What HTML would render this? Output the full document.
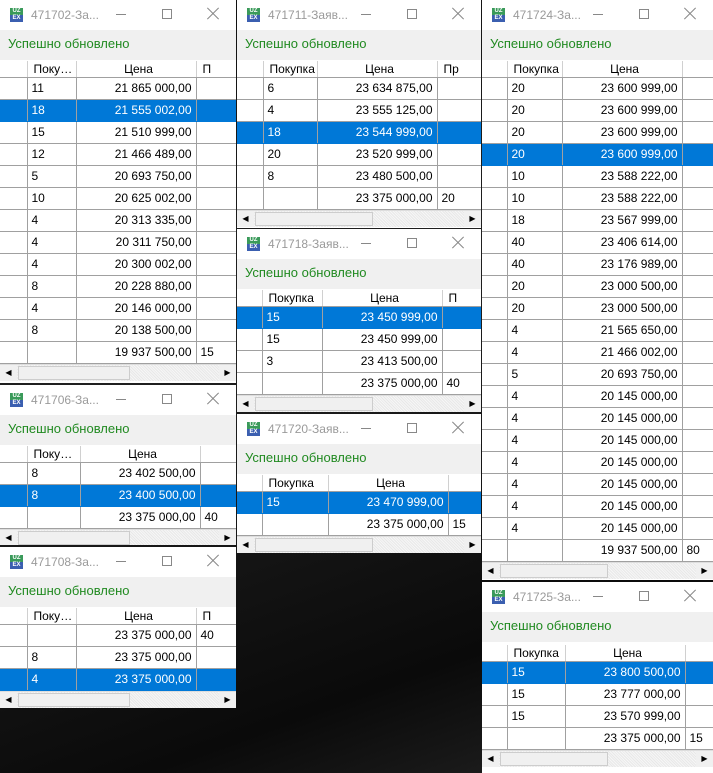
<!DOCTYPE html>
<html><head><meta charset="utf-8">
<style>
*{box-sizing:border-box;margin:0;padding:0}
body{width:713px;height:773px;position:relative;overflow:hidden;background:#111;font-family:"Liberation Sans",sans-serif;font-size:12px;color:#000}
.bg{position:absolute;left:0;top:0;width:713px;height:773px;background:linear-gradient(160deg,#0c0c0c 0%,#202020 40%,#161616 60%,#0a0a0a 80%,#262626 100%)}
.w{position:absolute;background:#fff;overflow:hidden}
.t{position:relative;height:30px;background:#fff}
.ic{position:absolute;left:10px;top:8px;width:13px;height:14px;font-size:6px;line-height:7px;font-weight:bold;color:#fff;text-align:center}
.ic b{display:block;background:#3a9a5a;height:7px}
.ic i{display:block;background:#3b5fb0;height:7px;font-style:normal}
.tt{position:absolute;left:31px;top:8px;color:#9a9a9a;font-size:12px}
.mn{position:absolute;top:14px;width:10px;height:1px;background:#888}
.mx{position:absolute;top:9px;width:10px;height:10px;border:1px solid #888}
.cl{position:absolute;top:8px;width:12px;height:12px}
.cl:before,.cl:after{content:"";position:absolute;left:-2px;top:5px;width:16px;height:1px;background:#888;transform:rotate(45deg)}
.cl:after{transform:rotate(-45deg)}
.s{height:31px;background:#f0f0f0;color:#218a21;font-size:13px;line-height:28px;padding-left:8px;border-bottom:1px solid #fff}
table{border-collapse:collapse;table-layout:fixed}
th{height:16px;font-weight:normal;text-align:left;padding:0 1px 0 6px;border-right:1px solid #d0d0d0;border-bottom:1px solid #a0a0a0;white-space:nowrap;overflow:hidden;text-overflow:ellipsis;background:#fff}
th.p{text-align:center}
td{height:22px;border:1px solid #a0a0a0;padding:0 4px;white-space:nowrap;overflow:hidden}
td.r{text-align:right}
td:first-child,th:first-child{border-left:none}
tr.sel td{background:#0078d7;color:#fff;border-color:#0078d7 #a0a0a0}
.sb{position:relative;height:17px;background:repeating-linear-gradient(45deg,#e8e8e8 0 1px,#f6f6f6 1px 2px);border-top:1px solid #ddd}
.sb .a{position:absolute;top:0;width:17px;height:16px;background:#f0f0f0;font-size:8px;line-height:16px;text-align:center;color:#000}
.sb .th{position:absolute;left:18px;top:1px;height:14px;background:#f0f0f0;border:1px solid #cdcdcd}
</style></head><body>
<div class="bg"></div>

<!-- 471702 -->
<div class="w" style="left:0;top:0;width:236px;height:383px">
<div class="t"><div class="ic"><b>UZ</b><i>EX</i></div><div class="tt">471702-За...</div><div class="mn" style="left:116px"></div><div class="mx" style="left:162px"></div><div class="cl" style="left:207px"></div></div>
<div class="s">Успешно обновлено</div>
<table style="width:256px"><colgroup><col style="width:27px"><col style="width:49px"><col style="width:120px"><col style="width:60px"></colgroup>
<tr><th></th><th>Покупка</th><th class="p">Цена</th><th>П</th></tr>
<tr><td></td><td>11</td><td class="r">21 865 000,00</td><td></td></tr>
<tr class="sel"><td></td><td>18</td><td class="r">21 555 002,00</td><td></td></tr>
<tr><td></td><td>15</td><td class="r">21 510 999,00</td><td></td></tr>
<tr><td></td><td>12</td><td class="r">21 466 489,00</td><td></td></tr>
<tr><td></td><td>5</td><td class="r">20 693 750,00</td><td></td></tr>
<tr><td></td><td>10</td><td class="r">20 625 002,00</td><td></td></tr>
<tr><td></td><td>4</td><td class="r">20 313 335,00</td><td></td></tr>
<tr><td></td><td>4</td><td class="r">20 311 750,00</td><td></td></tr>
<tr><td></td><td>4</td><td class="r">20 300 002,00</td><td></td></tr>
<tr><td></td><td>8</td><td class="r">20 228 880,00</td><td></td></tr>
<tr><td></td><td>4</td><td class="r">20 146 000,00</td><td></td></tr>
<tr><td></td><td>8</td><td class="r">20 138 500,00</td><td></td></tr>
<tr><td></td><td></td><td class="r">19 937 500,00</td><td>15</td></tr>
</table>
<div class="sb"><div class="a" style="left:0">◀</div><div class="th" style="width:112px"></div><div class="a" style="left:219px">▶</div></div>
</div>

<!-- 471706 -->
<div class="w" style="left:0;top:385px;width:236px;height:160px">
<div class="t"><div class="ic"><b>UZ</b><i>EX</i></div><div class="tt">471706-За...</div><div class="mn" style="left:116px"></div><div class="mx" style="left:162px"></div><div class="cl" style="left:207px"></div></div>
<div class="s">Успешно обновлено</div>
<table style="width:260px"><colgroup><col style="width:27px"><col style="width:53px"><col style="width:120px"><col style="width:60px"></colgroup>
<tr><th></th><th>Покупка</th><th class="p">Цена</th><th></th></tr>
<tr><td></td><td>8</td><td class="r">23 402 500,00</td><td></td></tr>
<tr class="sel"><td></td><td>8</td><td class="r">23 400 500,00</td><td></td></tr>
<tr><td></td><td></td><td class="r">23 375 000,00</td><td>40</td></tr>
</table>
<div class="sb"><div class="a" style="left:0">◀</div><div class="th" style="width:112px"></div><div class="a" style="left:219px">▶</div></div>
</div>

<!-- 471708 -->
<div class="w" style="left:0;top:547px;width:236px;height:161px">
<div class="t"><div class="ic"><b>UZ</b><i>EX</i></div><div class="tt">471708-За...</div><div class="mn" style="left:116px"></div><div class="mx" style="left:162px"></div><div class="cl" style="left:207px"></div></div>
<div class="s">Успешно обновлено</div>
<table style="width:256px"><colgroup><col style="width:27px"><col style="width:49px"><col style="width:120px"><col style="width:60px"></colgroup>
<tr><th></th><th>Покупка</th><th class="p">Цена</th><th>П</th></tr>
<tr><td></td><td></td><td class="r">23 375 000,00</td><td>40</td></tr>
<tr><td></td><td>8</td><td class="r">23 375 000,00</td><td></td></tr>
<tr class="sel"><td></td><td>4</td><td class="r">23 375 000,00</td><td></td></tr>
</table>
<div class="sb"><div class="a" style="left:0">◀</div><div class="th" style="width:112px"></div><div class="a" style="left:219px">▶</div></div>
</div>

<!-- 471711 -->
<div class="w" style="left:237px;top:0;width:244px;height:228px">
<div class="t"><div class="ic"><b>UZ</b><i>EX</i></div><div class="tt">471711-Заяв...</div><div class="mn" style="left:124px"></div><div class="mx" style="left:170px"></div><div class="cl" style="left:215px"></div></div>
<div class="s">Успешно обновлено</div>
<table style="width:260px"><colgroup><col style="width:26px"><col style="width:54px"><col style="width:120px"><col style="width:60px"></colgroup>
<tr><th></th><th>Покупка</th><th class="p">Цена</th><th>Пр</th></tr>
<tr><td></td><td>6</td><td class="r">23 634 875,00</td><td></td></tr>
<tr><td></td><td>4</td><td class="r">23 555 125,00</td><td></td></tr>
<tr class="sel"><td></td><td>18</td><td class="r">23 544 999,00</td><td></td></tr>
<tr><td></td><td>20</td><td class="r">23 520 999,00</td><td></td></tr>
<tr><td></td><td>8</td><td class="r">23 480 500,00</td><td></td></tr>
<tr><td></td><td></td><td class="r">23 375 000,00</td><td>20</td></tr>
</table>
<div class="sb"><div class="a" style="left:0">◀</div><div class="th" style="width:118px"></div><div class="a" style="left:227px">▶</div></div>
</div>

<!-- 471718 -->
<div class="w" style="left:237px;top:229px;width:244px;height:183px">
<div class="t"><div class="ic"><b>UZ</b><i>EX</i></div><div class="tt">471718-Заяв...</div><div class="mn" style="left:124px"></div><div class="mx" style="left:170px"></div><div class="cl" style="left:215px"></div></div>
<div class="s">Успешно обновлено</div>
<table style="width:265px"><colgroup><col style="width:25px"><col style="width:60px"><col style="width:120px"><col style="width:60px"></colgroup>
<tr><th></th><th>Покупка</th><th class="p">Цена</th><th>П</th></tr>
<tr class="sel"><td></td><td>15</td><td class="r">23 450 999,00</td><td></td></tr>
<tr><td></td><td>15</td><td class="r">23 450 999,00</td><td></td></tr>
<tr><td></td><td>3</td><td class="r">23 413 500,00</td><td></td></tr>
<tr><td></td><td></td><td class="r">23 375 000,00</td><td>40</td></tr>
</table>
<div class="sb"><div class="a" style="left:0">◀</div><div class="th" style="width:118px"></div><div class="a" style="left:227px">▶</div></div>
</div>

<!-- 471720 -->
<div class="w" style="left:237px;top:414px;width:244px;height:139px">
<div class="t"><div class="ic"><b>UZ</b><i>EX</i></div><div class="tt">471720-Заяв...</div><div class="mn" style="left:124px"></div><div class="mx" style="left:170px"></div><div class="cl" style="left:215px"></div></div>
<div class="s">Успешно обновлено</div>
<table style="width:271px"><colgroup><col style="width:25px"><col style="width:66px"><col style="width:120px"><col style="width:60px"></colgroup>
<tr><th></th><th>Покупка</th><th class="p">Цена</th><th></th></tr>
<tr class="sel"><td></td><td>15</td><td class="r">23 470 999,00</td><td></td></tr>
<tr><td></td><td></td><td class="r">23 375 000,00</td><td>15</td></tr>
</table>
<div class="sb"><div class="a" style="left:0">◀</div><div class="th" style="width:118px"></div><div class="a" style="left:227px">▶</div></div>
</div>

<!-- 471724 -->
<div class="w" style="left:482px;top:0;width:231px;height:580px">
<div class="t"><div class="ic"><b>UZ</b><i>EX</i></div><div class="tt">471724-За...</div><div class="mn" style="left:111px"></div><div class="mx" style="left:157px"></div><div class="cl" style="left:202px"></div></div>
<div class="s">Успешно обновлено</div>
<table style="width:260px"><colgroup><col style="width:25px"><col style="width:55px"><col style="width:120px"><col style="width:60px"></colgroup>
<tr><th></th><th>Покупка</th><th class="p">Цена</th><th></th></tr>
<tr><td></td><td>20</td><td class="r">23 600 999,00</td><td></td></tr>
<tr><td></td><td>20</td><td class="r">23 600 999,00</td><td></td></tr>
<tr><td></td><td>20</td><td class="r">23 600 999,00</td><td></td></tr>
<tr class="sel"><td></td><td>20</td><td class="r">23 600 999,00</td><td></td></tr>
<tr><td></td><td>10</td><td class="r">23 588 222,00</td><td></td></tr>
<tr><td></td><td>10</td><td class="r">23 588 222,00</td><td></td></tr>
<tr><td></td><td>18</td><td class="r">23 567 999,00</td><td></td></tr>
<tr><td></td><td>40</td><td class="r">23 406 614,00</td><td></td></tr>
<tr><td></td><td>40</td><td class="r">23 176 989,00</td><td></td></tr>
<tr><td></td><td>20</td><td class="r">23 000 500,00</td><td></td></tr>
<tr><td></td><td>20</td><td class="r">23 000 500,00</td><td></td></tr>
<tr><td></td><td>4</td><td class="r">21 565 650,00</td><td></td></tr>
<tr><td></td><td>4</td><td class="r">21 466 002,00</td><td></td></tr>
<tr><td></td><td>5</td><td class="r">20 693 750,00</td><td></td></tr>
<tr><td></td><td>4</td><td class="r">20 145 000,00</td><td></td></tr>
<tr><td></td><td>4</td><td class="r">20 145 000,00</td><td></td></tr>
<tr><td></td><td>4</td><td class="r">20 145 000,00</td><td></td></tr>
<tr><td></td><td>4</td><td class="r">20 145 000,00</td><td></td></tr>
<tr><td></td><td>4</td><td class="r">20 145 000,00</td><td></td></tr>
<tr><td></td><td>4</td><td class="r">20 145 000,00</td><td></td></tr>
<tr><td></td><td>4</td><td class="r">20 145 000,00</td><td></td></tr>
<tr><td></td><td></td><td class="r">19 937 500,00</td><td>80</td></tr>
</table>
<div class="sb"><div class="a" style="left:0">◀</div><div class="th" style="width:108px"></div><div class="a" style="left:214px">▶</div></div>
</div>

<!-- 471725 -->
<div class="w" style="left:482px;top:582px;width:231px;height:191px">
<div class="t"><div class="ic"><b>UZ</b><i>EX</i></div><div class="tt">471725-За...</div><div class="mn" style="left:111px"></div><div class="mx" style="left:157px"></div><div class="cl" style="left:202px"></div></div>
<div class="s">Успешно обновлено</div>
<table style="width:263px;margin-top:2px"><colgroup><col style="width:25px"><col style="width:58px"><col style="width:120px"><col style="width:60px"></colgroup>
<tr><th></th><th>Покупка</th><th class="p">Цена</th><th></th></tr>
<tr class="sel"><td></td><td>15</td><td class="r">23 800 500,00</td><td></td></tr>
<tr><td></td><td>15</td><td class="r">23 777 000,00</td><td></td></tr>
<tr><td></td><td>15</td><td class="r">23 570 999,00</td><td></td></tr>
<tr><td></td><td></td><td class="r">23 375 000,00</td><td>15</td></tr>
</table>
<div class="sb"><div class="a" style="left:0">◀</div><div class="th" style="width:108px"></div><div class="a" style="left:214px">▶</div></div>
</div>

</body></html>
